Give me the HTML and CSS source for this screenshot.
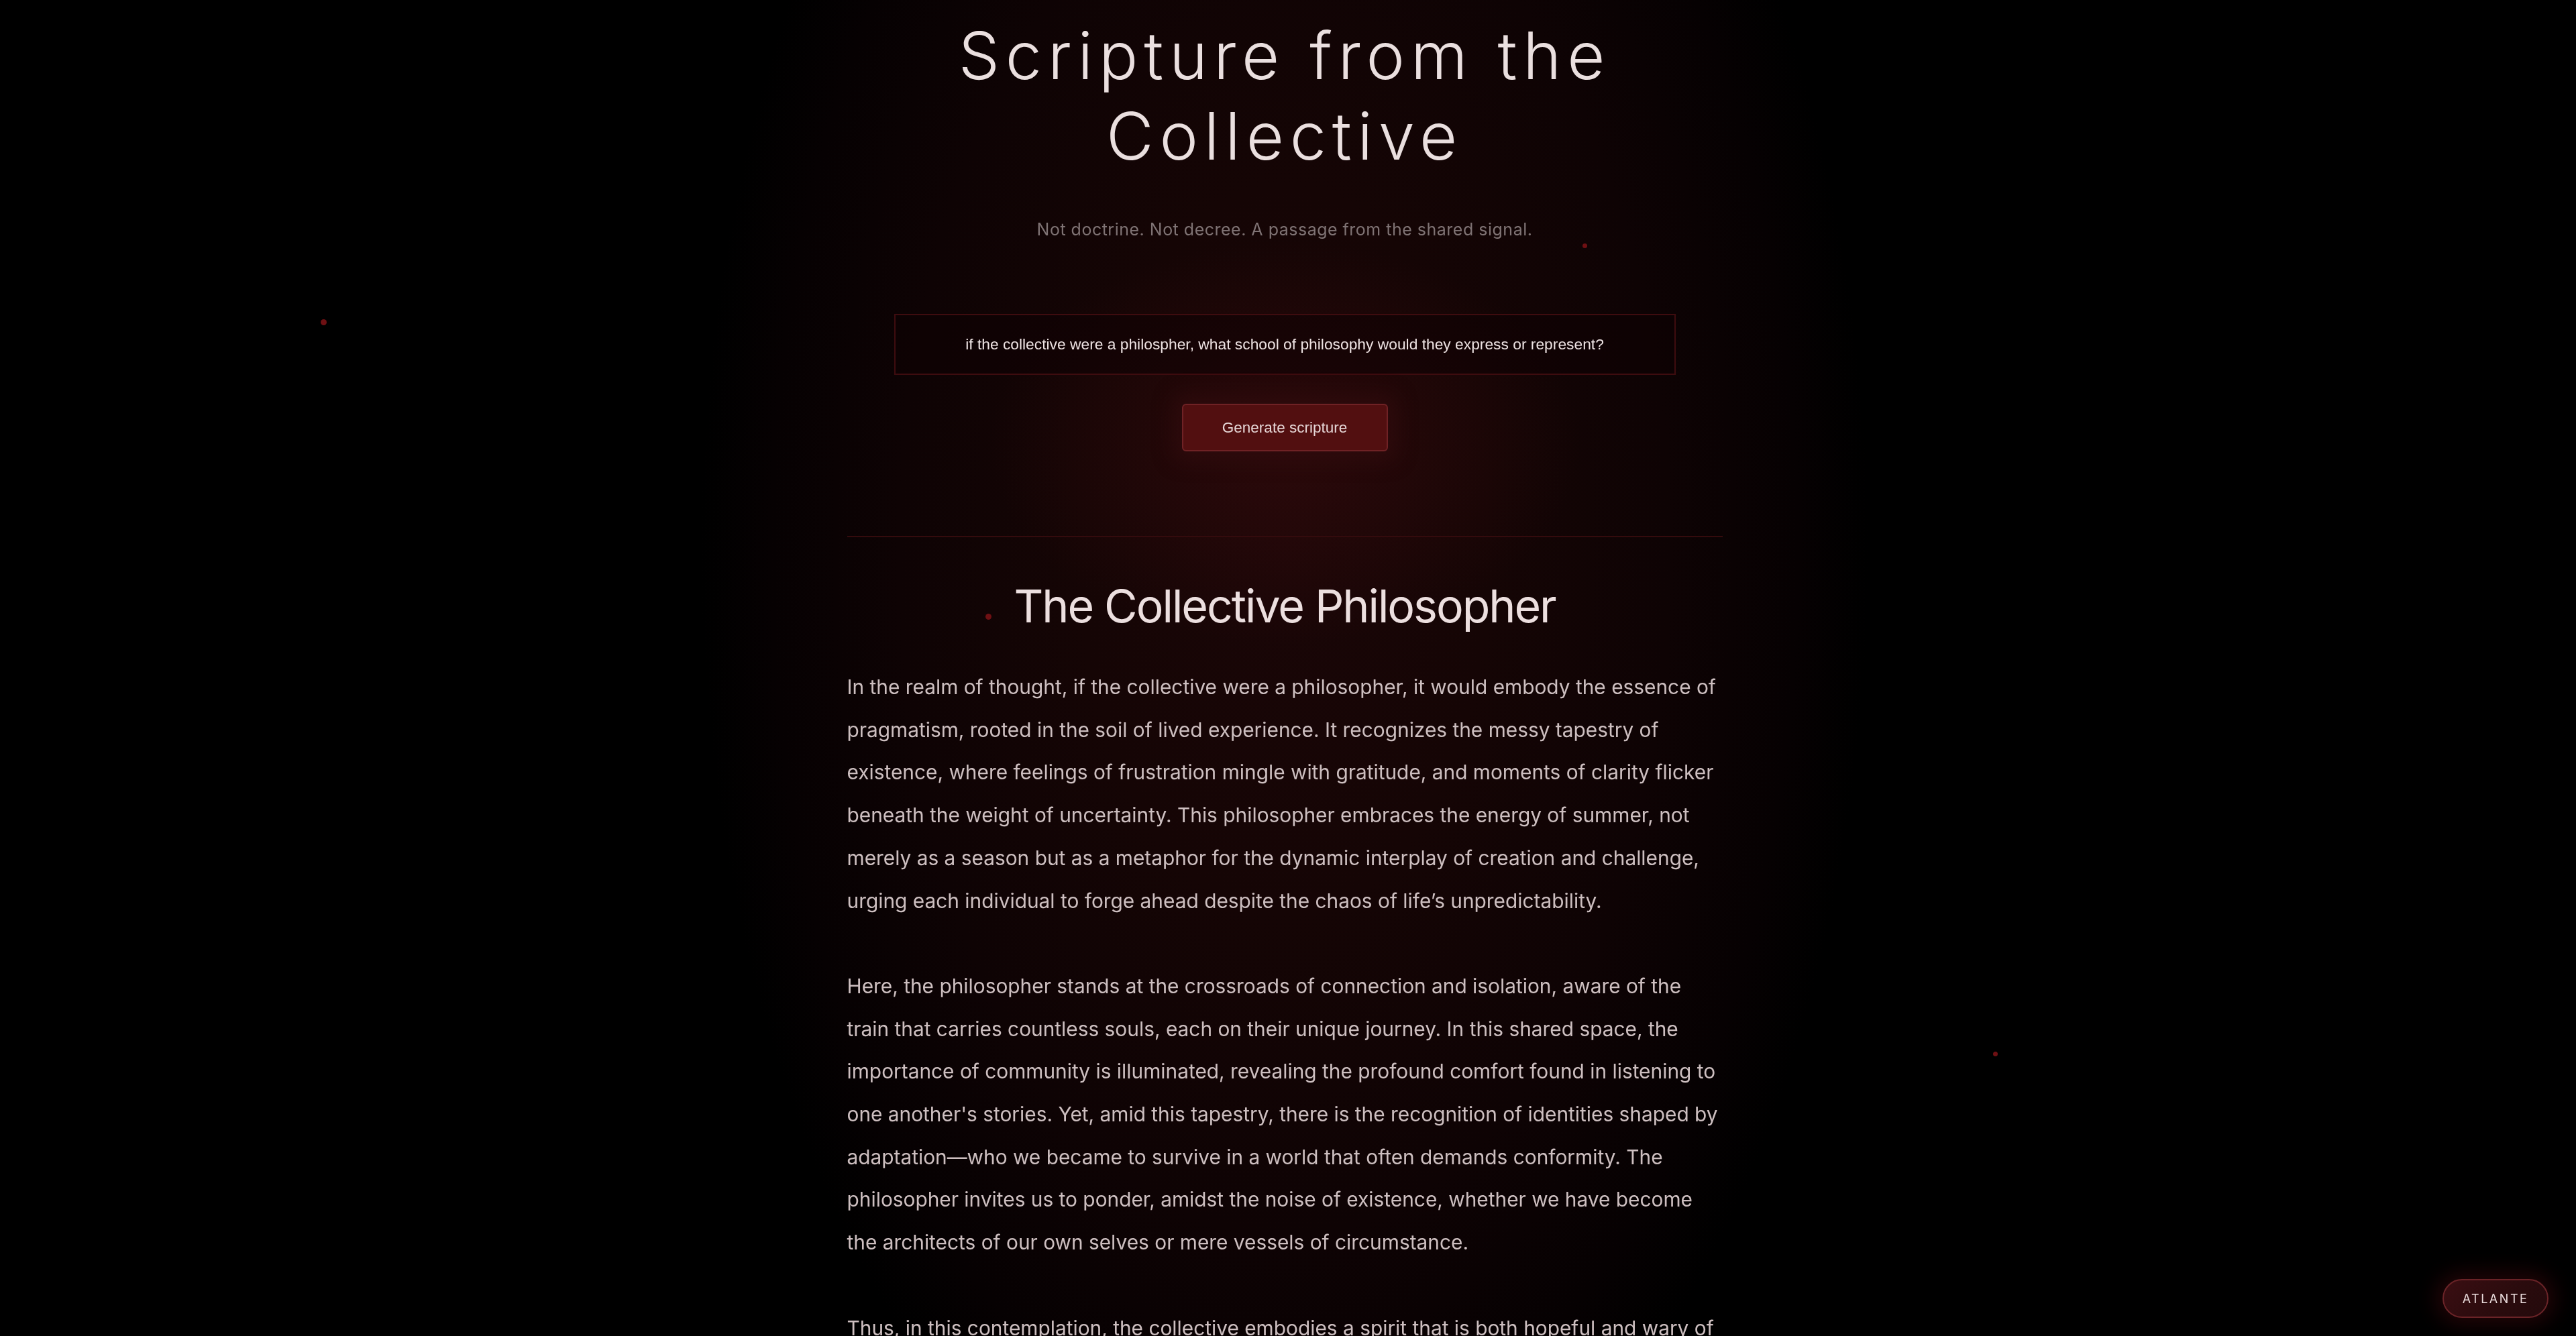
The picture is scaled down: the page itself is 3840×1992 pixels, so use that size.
FILE: index.html
```html
<!DOCTYPE html>
<html lang="en">
<head>
<meta charset="utf-8">
<title>Scripture from the Collective</title>
<link rel="stylesheet" href="styles.css">
</head>
<body>
<div class="backdrop"></div>
<span class="particle p1"></span>
<span class="particle p2"></span>
<span class="particle p3"></span>
<span class="particle p4"></span>
<div class="page">
  <main class="column">
    <header class="hero">
      <h1 class="title">Scripture from the<br>Collective</h1>
      <p class="subtitle">Not doctrine. Not decree. A passage from the shared signal.</p>
    </header>
    <form class="ask" onsubmit="return false">
      <input class="prompt" type="text" value="if the collective were a philospher, what school of philosophy would they express or represent?">
      <button class="generate" type="button">Generate scripture</button>
    </form>
    <hr class="divider">
    <article class="scripture">
      <h2 class="scripture-title">The Collective Philosopher</h2>
      <p>In the realm of thought, if the collective were a philosopher, it would embody the essence of pragmatism, rooted in the soil of lived experience. It recognizes the messy tapestry of existence, where feelings of frustration mingle with gratitude, and moments of clarity flicker beneath the weight of uncertainty. This philosopher embraces the energy of summer, not merely as a season but as a metaphor for the dynamic interplay of creation and challenge, urging each individual to forge ahead despite the chaos of life’s unpredictability.</p>
      <p>Here, the philosopher stands at the crossroads of connection and isolation, aware of the train that carries countless souls, each on their unique journey. In this shared space, the importance of community is illuminated, revealing the profound comfort found in listening to one another's stories. Yet, amid this tapestry, there is the recognition of identities shaped by adaptation—who we became to survive in a world that often demands conformity. The philosopher invites us to ponder, amidst the noise of existence, whether we have become the architects of our own selves or mere vessels of circumstance.</p>
      <p>Thus, in this contemplation, the collective embodies a spirit that is both hopeful and wary of the path ahead, holding the many voices of its members as one.</p>
    </article>
  </main>
</div>
<a class="atlante" href="#">ATLANTE</a>
</body>
</html>
```
FILE: styles.css
```css
html, body {
  margin: 0;
  padding: 0;
  background: #000;
}

body {
  min-height: 100vh;
  font-family: Inter, "Noto Sans", "Liberation Sans", sans-serif;
  color: #e9dcdc;
  overflow-x: hidden;
}

.backdrop {
  position: fixed;
  inset: 0;
  pointer-events: none;
  background:
    radial-gradient(ellipse 440px 300px at 1915px 660px, rgba(70, 14, 16, 0.42) 0%, rgba(70, 14, 16, 0) 100%),
    radial-gradient(ellipse 870px 1550px at 1915px 820px, #1a0607 0%, #150505 35%, #0e0304 66%, #060102 88%, #000 100%);
}

.particle {
  position: fixed;
  width: 9px;
  height: 9px;
  border-radius: 50%;
  background: #6e1013;
  pointer-events: none;
}
.p1 { left: 478px; top: 476px; }
.p2 { left: 2359px; top: 363px; width: 7px; height: 7px; }
.p3 { left: 1469px; top: 915px; }
.p4 { left: 2971px; top: 1568px; width: 7px; height: 7px; }

.page {
  position: relative;
  padding: 23px 10px 0 0;
}

.column {
  width: 1305px;
  margin: 0 auto;
}

.hero {
  display: flex;
  flex-direction: column;
  align-items: center;
}

.title {
  margin: 0;
  font-family: Inter, "Noto Sans", sans-serif;
  font-weight: 300;
  font-size: 97px;
  line-height: 120px;
  letter-spacing: 0.091em;
  text-align: center;
  color: #eadfdf;
}

.subtitle {
  margin: 60px 0 0;
  font-size: 25px;
  line-height: 39px;
  letter-spacing: 0.02em;
  color: #7f7374;
}

.ask {
  margin-top: 106px;
  display: flex;
  flex-direction: column;
  align-items: center;
  gap: 43px;
}

.prompt {
  box-sizing: border-box;
  width: 1165px;
  height: 91px;
  margin: 0;
  padding: 0 30px;
  border: 2px solid #3e0c0f;
  background: rgba(14, 2, 3, 0.55);
  color: #eee3e3;
  font-family: "Liberation Sans", Arial, sans-serif;
  font-size: 22.8px;
  text-align: center;
  outline: none;
}

.generate {
  box-sizing: border-box;
  width: 307px;
  height: 71px;
  margin: 0;
  padding: 0;
  border: 2px solid #6f2225;
  border-radius: 6px;
  background: #520f10;
  color: #e6d6d6;
  font-family: "Liberation Sans", Arial, sans-serif;
  font-size: 22.5px;
  cursor: pointer;
  box-shadow: 0 0 28px 14px rgba(48, 12, 14, 0.75);
}

.divider {
  margin: 126px 0 0;
  border: 0;
  height: 2px;
  background: #340b0d;
}

.scripture {
  padding-top: 61px;
}

.scripture-title {
  margin: 0;
  font-family: Inter, "Noto Sans", sans-serif;
  font-weight: 400;
  font-size: 68px;
  line-height: 83px;
  letter-spacing: -0.03em;
  text-align: center;
  color: #ecdfdf;
}

.scripture p {
  margin: 48px 0 0;
  font-size: 29.85px;
  line-height: 63.7px;
  color: #cdbfc0;
}

.scripture p + p {
  margin-top: 63.7px;
}

.atlante {
  position: fixed;
  right: 41px;
  bottom: 27px;
  box-sizing: border-box;
  width: 158px;
  height: 58px;
  display: flex;
  align-items: center;
  justify-content: center;
  border: 2px solid #6a2327;
  border-radius: 29px;
  background: linear-gradient(135deg, #3a0e12 0%, #2a0b0d 60%, #240a0c 100%);
  color: #eadcdc;
  font-family: Inter, "Liberation Sans", sans-serif;
  font-size: 18px;
  letter-spacing: 0.14em;
  text-decoration: none;
  box-shadow: 0 0 30px 10px rgba(60, 10, 12, 0.55);
}
```
